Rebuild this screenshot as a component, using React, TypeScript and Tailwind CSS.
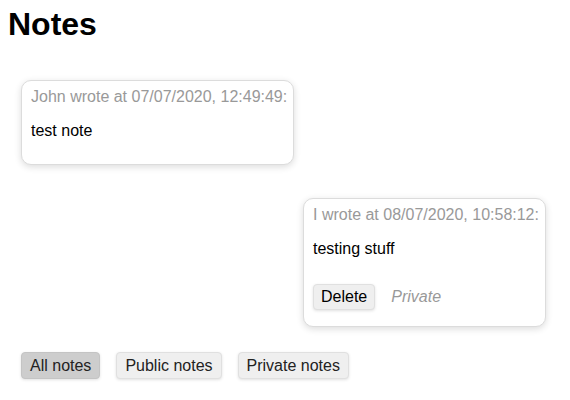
import React, { useState } from 'react';

type Note = { id: number; author: string; time: string; text: string; mine: boolean; isPrivate?: boolean };

const notes: Note[] = [
    { id: 1, author: 'John', time: '07/07/2020, 12:49:49', text: 'test note', mine: false },
    { id: 2, author: 'I', time: '08/07/2020, 10:58:12', text: 'testing stuff', mine: true, isPrivate: true },
];

const filters = ['All notes', 'Public notes', 'Private notes'];

const App: React.FC = () => {
    const [filter, setFilter] = useState('All notes');

    return (
        <div className="min-h-[400px] bg-white pt-[6px] text-base text-black font-['Liberation_Sans',Arial,sans-serif]">
            <h1 className="pl-2 text-[32px] font-bold leading-[37px]">Notes</h1>

            {/* Note list */}
            <div className="mt-[37px] flex flex-col pl-[21px] pr-[24px]">
                {notes.map((note) => (
                    <div
                        key={note.id}
                        className={
                            note.mine
                                ? 'mt-[33px] w-[243px] self-end rounded-[10px] border border-[#dcdcdc] bg-white pl-[9px] pr-[5px] pt-[7px] pb-[8px] shadow-[0_2px_7px_rgba(0,0,0,0.14)]'
                                : 'w-[273px] self-start rounded-[10px] border border-[#dcdcdc] bg-white pl-[9px] pr-[5px] pt-[7px] pb-[8px] shadow-[0_2px_7px_rgba(0,0,0,0.14)]'
                        }
                    >
                        <div className="overflow-hidden whitespace-nowrap leading-[18px] text-[#999]">
                            {note.author} wrote at {note.time}:
                        </div>
                        <p className="my-4 leading-[18px]">{note.text}</p>
                        {note.mine && (
                            <div className="mt-[26px] mb-[8px] flex items-center gap-4">
                                <button className="rounded-[4px] border border-[#e0e0e0] bg-[#efefef] px-[7px] py-[3px] leading-[18px] text-black shadow-[0_1px_3px_rgba(0,0,0,0.12)]">
                                    Delete
                                </button>
                                <span className="italic leading-[18px] text-[#999]">{note.isPrivate ? 'Private' : 'Public'}</span>
                            </div>
                        )}
                    </div>
                ))}
            </div>

            {/* Filters */}
            <div className="mt-[25px] flex gap-4 pl-[21px]">
                {filters.map((f) => (
                    <button
                        key={f}
                        onClick={() => setFilter(f)}
                        className={
                            f === filter
                                ? 'rounded-[4px] border border-[#c4c4c4] bg-[#cdcdcd] px-[8px] py-[4px] leading-[17px] text-[#222] shadow-[0_1px_3px_rgba(0,0,0,0.12)]'
                                : 'rounded-[4px] border border-[#e0e0e0] bg-[#efefef] px-[8px] py-[4px] leading-[17px] text-[#222] shadow-[0_1px_3px_rgba(0,0,0,0.12)]'
                        }
                    >
                        {f}
                    </button>
                ))}
            </div>
        </div>
    );
};

export default App;
